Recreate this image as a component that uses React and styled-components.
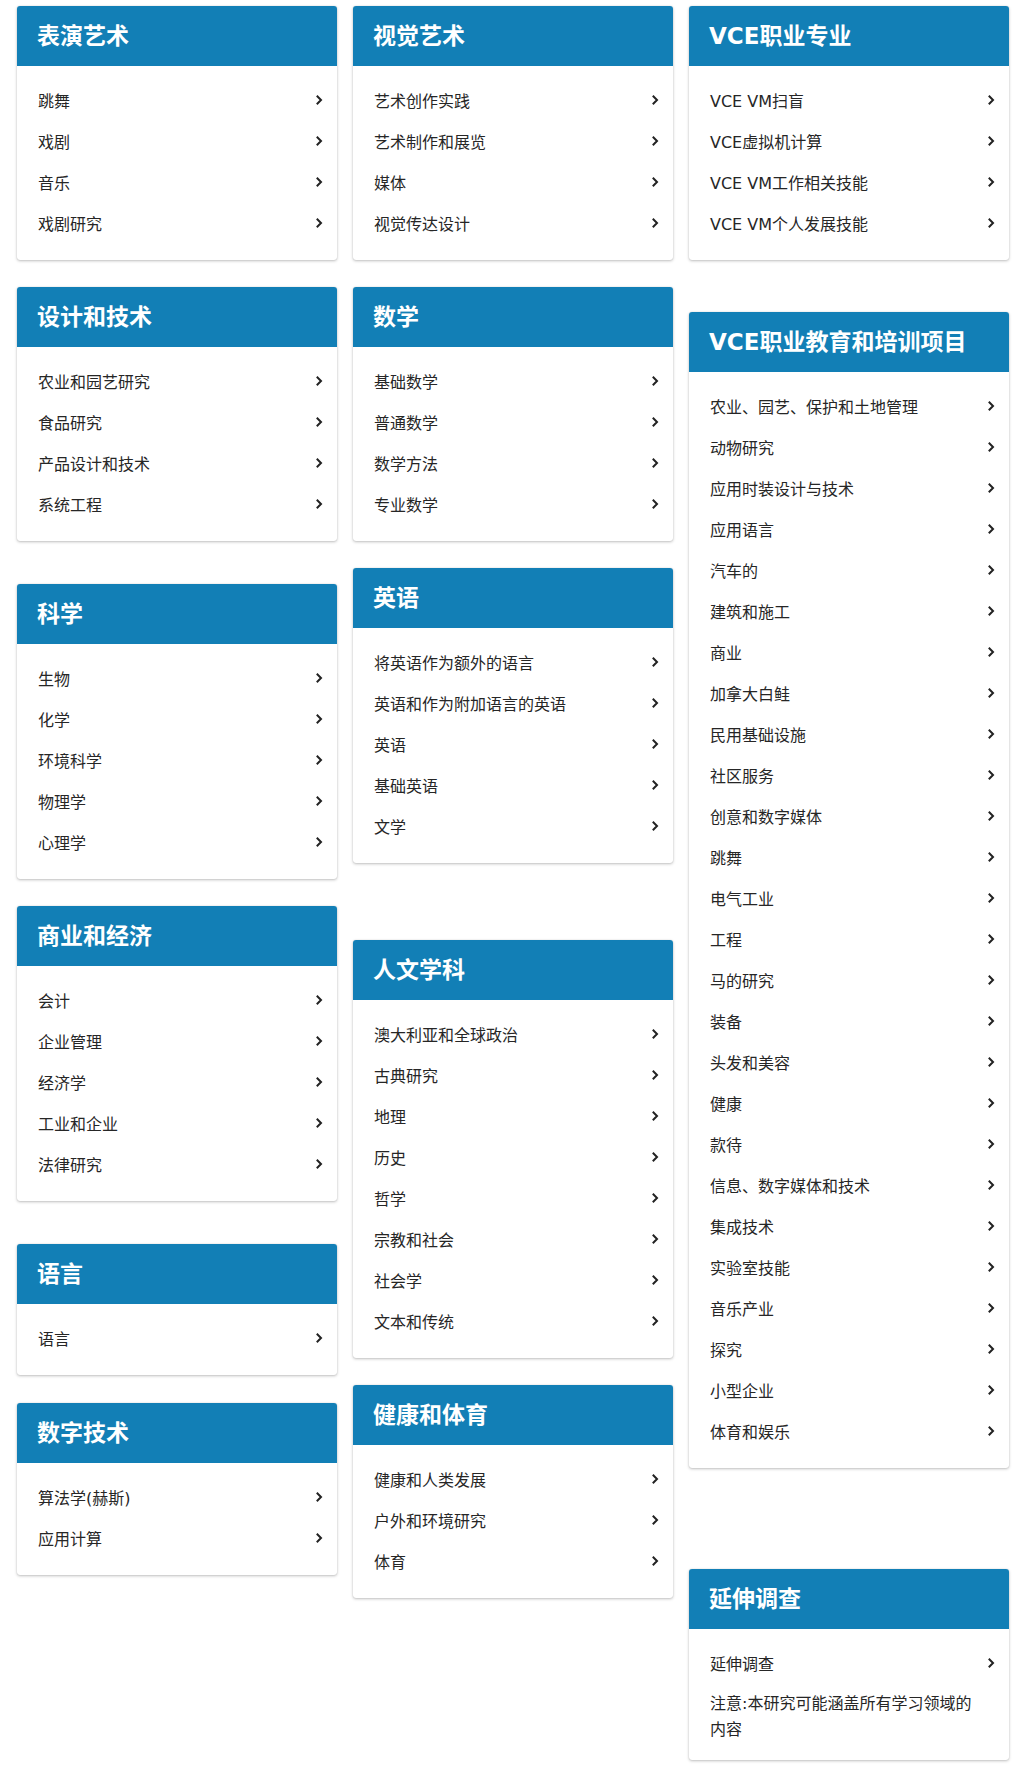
import React from "react";
import styled, { createGlobalStyle } from "styled-components";

const GlobalStyle = createGlobalStyle`
  body {
    margin: 0;
    background: #fff;
    font-family: "DejaVu Sans", "Noto Sans CJK SC", sans-serif;
  }
`;

const Page = styled.div`
  display: grid;
  grid-template-columns: repeat(3, 320px);
  column-gap: 16px;
  align-items: start;
  padding: 6px 0 24px 17px;
`;

const Column = styled.div`
  display: flex;
  flex-direction: column;
`;

const Card = styled.section`
  margin-top: ${(p) => p.$offset || 0}px;
  background: #fff;
  border-radius: 3px;
  overflow: hidden;
  box-shadow: 0 1px 3px rgba(0, 0, 0, 0.25), 0 0 1px rgba(0, 0, 0, 0.18);
`;

const Header = styled.h2`
  display: flex;
  align-items: center;
  height: 60px;
  margin: 0;
  padding: 0 14px 5px 20px;
  box-sizing: border-box;
  background: #127fb6;
  color: #fff;
  font-size: 23px;
  font-weight: 700;
`;

const List = styled.ul`
  list-style: none;
  margin: 0;
  padding: 13px 14px 17px 21px;
`;

const Item = styled.li`
  display: flex;
  align-items: center;
  justify-content: space-between;
  height: 41px;
  font-size: 16px;
  color: #262626;
  cursor: pointer;
`;

const Note = styled.li`
  margin-top: 8px;
  padding-right: 12px;
  font-size: 16px;
  line-height: 26px;
  color: #262626;
`;

const Chevron = () => (
  <svg width="8" height="12" viewBox="0 0 8 12" aria-hidden="true">
    <path
      d="M1.8 1.8 L6 6 L1.8 10.2"
      fill="none"
      stroke="#222"
      strokeWidth="2"
    />
  </svg>
);

const columns = [
  [
    { title: "表演艺术", items: ["跳舞", "戏剧", "音乐", "戏剧研究"] },
    {
      title: "设计和技术",
      offset: 27,
      items: ["农业和园艺研究", "食品研究", "产品设计和技术", "系统工程"],
    },
    {
      title: "科学",
      offset: 43,
      items: ["生物", "化学", "环境科学", "物理学", "心理学"],
    },
    {
      title: "商业和经济",
      offset: 27,
      items: ["会计", "企业管理", "经济学", "工业和企业", "法律研究"],
    },
    { title: "语言", offset: 43, items: ["语言"] },
    { title: "数字技术", offset: 28, items: ["算法学(赫斯)", "应用计算"] },
  ],
  [
    {
      title: "视觉艺术",
      items: ["艺术创作实践", "艺术制作和展览", "媒体", "视觉传达设计"],
    },
    {
      title: "数学",
      offset: 27,
      items: ["基础数学", "普通数学", "数学方法", "专业数学"],
    },
    {
      title: "英语",
      offset: 27,
      items: [
        "将英语作为额外的语言",
        "英语和作为附加语言的英语",
        "英语",
        "基础英语",
        "文学",
      ],
    },
    {
      title: "人文学科",
      offset: 77,
      items: [
        "澳大利亚和全球政治",
        "古典研究",
        "地理",
        "历史",
        "哲学",
        "宗教和社会",
        "社会学",
        "文本和传统",
      ],
    },
    {
      title: "健康和体育",
      offset: 27,
      items: ["健康和人类发展", "户外和环境研究", "体育"],
    },
  ],
  [
    {
      title: "VCE职业专业",
      items: [
        "VCE VM扫盲",
        "VCE虚拟机计算",
        "VCE VM工作相关技能",
        "VCE VM个人发展技能",
      ],
    },
    {
      title: "VCE职业教育和培训项目",
      offset: 52,
      items: [
        "农业、园艺、保护和土地管理",
        "动物研究",
        "应用时装设计与技术",
        "应用语言",
        "汽车的",
        "建筑和施工",
        "商业",
        "加拿大白鲑",
        "民用基础设施",
        "社区服务",
        "创意和数字媒体",
        "跳舞",
        "电气工业",
        "工程",
        "马的研究",
        "装备",
        "头发和美容",
        "健康",
        "款待",
        "信息、数字媒体和技术",
        "集成技术",
        "实验室技能",
        "音乐产业",
        "探究",
        "小型企业",
        "体育和娱乐",
      ],
    },
    {
      title: "延伸调查",
      offset: 101,
      items: ["延伸调查"],
      note: "注意:本研究可能涵盖所有学习领域的内容",
    },
  ],
];

function SubjectCard({ title, items, note, offset }) {
  return (
    <Card $offset={offset}>
      <Header>{title}</Header>
      <List>
        {items.map((name) => (
          <Item key={name}>
            <span>{name}</span>
            <Chevron />
          </Item>
        ))}
        {note && <Note>{note}</Note>}
      </List>
    </Card>
  );
}

export default function App() {
  return (
    <>
      <GlobalStyle />
      <Page>
        {columns.map((cards, i) => (
          <Column key={i}>
            {cards.map((card) => (
              <SubjectCard key={card.title} {...card} />
            ))}
          </Column>
        ))}
      </Page>
    </>
  );
}
